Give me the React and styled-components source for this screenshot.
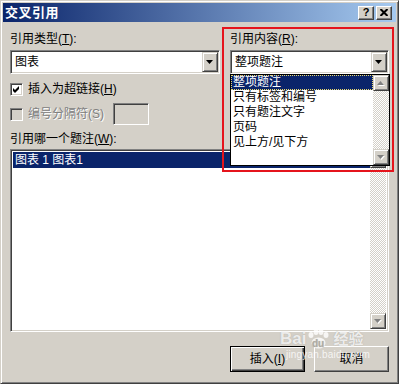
import styled, { createGlobalStyle } from "styled-components";

const GlobalStyle = createGlobalStyle`
  html, body {
    margin: 0;
    padding: 0;
    background: #d4d0c8;
  }
  body {
    font-family: "Liberation Sans", "Noto Sans CJK SC", sans-serif;
    font-size: 12px;
    color: #000;
  }
`;

const NAVY = "#0a246a";
const FACE = "#d4d0c8";

const Window = styled.div`
  position: relative;
  width: 399px;
  height: 384px;
  box-sizing: border-box;
  background: ${FACE};
  border: 1px solid;
  border-color: ${FACE} #404040 #404040 ${FACE};
  box-shadow: inset 1px 1px #fff, inset -1px -1px #808080;
  padding: 2px;
  display: flex;
  flex-direction: column;
`;

const TitleBar = styled.div`
  height: 19px;
  display: flex;
  align-items: center;
  gap: 2px;
  padding: 0 4px 0 2px;
  background: linear-gradient(to right, ${NAVY}, #a6caf0);
`;

const TitleText = styled.div`
  flex: 1;
  color: #fff;
  font-weight: bold;
  font-size: 13px;
  line-height: 15px;
  letter-spacing: 0.5px;
`;

const TitleButton = styled.div`
  width: 16px;
  height: 14px;
  box-sizing: border-box;
  background: ${FACE};
  border: 1px solid;
  border-color: #fff #404040 #404040 #fff;
  box-shadow: inset -1px -1px #808080;
  display: flex;
  align-items: center;
  justify-content: center;
  font-weight: bold;
  font-size: 11px;
  line-height: 11px;
`;

const Body = styled.div`
  flex: 1;
  display: flex;
  flex-direction: column;
  padding: 10px 7px 0;
`;

const TopGrid = styled.div`
  display: grid;
  grid-template-columns: 210px 159px;
  column-gap: 10px;
  align-items: start;
`;

const Column = styled.div`
  display: flex;
  flex-direction: column;
`;

const Label = styled.div`
  line-height: 14px;
  height: 14px;
  margin-top: ${(p) => p.$mt || 0}px;
  margin-bottom: ${(p) => p.$mb || 0}px;
  white-space: nowrap;
  color: ${(p) => (p.$disabled ? "#808080" : "#000")};
  text-shadow: ${(p) => (p.$disabled ? "1px 1px #fff" : "none")};
`;

const Field = styled.div`
  position: relative;
  display: flex;
  flex-direction: column;
`;

const Sunken = styled.div`
  box-sizing: border-box;
  border: 1px solid;
  border-color: #808080 #fff #fff #808080;
  box-shadow: inset 1px 1px #404040, inset -1px -1px ${FACE};
`;

const Combo = styled(Sunken)`
  height: 24px;
  background: #fff;
  display: flex;
  align-items: center;
  padding: 1px 1px 1px 4px;
  line-height: 14px;
`;

const ComboText = styled.div`
  flex: 1;
`;

const RaisedBtn = styled.div`
  box-sizing: border-box;
  background: ${FACE};
  border: 1px solid;
  border-color: ${FACE} #404040 #404040 ${FACE};
  box-shadow: inset 1px 1px #fff, inset -1px -1px #808080;
  display: flex;
  align-items: center;
  justify-content: center;
`;

const ArrowBtn = styled(RaisedBtn)`
  width: 16px;
  height: ${(p) => p.$h || 16}px;
  flex-shrink: 0;
`;

const CheckRow = styled.div`
  display: flex;
  align-items: center;
  gap: 5px;
  height: ${(p) => p.$h}px;
  margin-top: ${(p) => p.$mt}px;
`;

const CheckBox = styled(Sunken)`
  width: 13px;
  height: 13px;
  background: ${(p) => (p.$disabled ? FACE : "#fff")};
  display: flex;
  align-items: center;
  justify-content: center;
  flex-shrink: 0;
`;

const SmallInput = styled(Sunken)`
  width: 36px;
  height: 22px;
  margin-left: 4px;
  background: ${FACE};
`;

const ListBox = styled(Sunken)`
  height: 183px;
  margin-top: 3px;
  background: #fff;
  display: flex;
  padding: 2px;
`;

const ListRows = styled.div`
  flex: 1;
  display: flex;
  flex-direction: column;
`;

const Row = styled.div`
  height: ${(p) => p.$h}px;
  line-height: ${(p) => p.$h}px;
  padding-left: 2px;
  white-space: nowrap;
  background: ${(p) => (p.$selected ? NAVY : "transparent")};
  color: ${(p) => (p.$selected ? "#fff" : "#000")};
  outline: ${(p) => (p.$focus ? "1px dotted #e8d870" : "none")};
  outline-offset: -1px;
`;

const ScrollBar = styled.div`
  width: 16px;
  display: flex;
  flex-direction: column;
  flex-shrink: 0;
`;

const Track = styled.div`
  flex: 1;
  background-color: #fff;
  background-image: conic-gradient(${FACE} 25%, #fff 0 50%, ${FACE} 0 75%, #fff 0);
  background-size: 2px 2px;
`;

const DropList = styled.div`
  position: absolute;
  top: 100%;
  left: 0;
  width: calc(100% + 1px);
  height: 92px;
  box-sizing: border-box;
  border: 1px solid #000;
  background: #fff;
  display: flex;
  z-index: 2;
`;

const ButtonRow = styled.div`
  display: flex;
  justify-content: flex-end;
  gap: 9px;
  margin-top: 14px;
`;

const DialogButton = styled.div`
  width: 75px;
  height: 26px;
  box-sizing: border-box;
  background: ${FACE};
  display: flex;
  align-items: center;
  justify-content: center;
  line-height: 14px;
  border: 1px solid;
  border-color: ${(p) => (p.$default ? "#000" : "#fff #404040 #404040 #fff")};
  box-shadow: ${(p) =>
    p.$default
      ? "inset 1px 1px #fff, inset -1px -1px #404040, inset -2px -2px #808080"
      : "inset -1px -1px #808080"};
`;

const Highlight = styled.div`
  position: absolute;
  left: 221px;
  top: 26px;
  width: 172px;
  height: 145px;
  box-sizing: border-box;
  border: 2px solid #e5141c;
  pointer-events: none;
  z-index: 3;
`;

const Watermark = styled.div`
  position: absolute;
  left: 279px;
  top: 328px;
  color: rgba(255, 255, 255, 0.8);
  pointer-events: none;
  z-index: 4;
  display: flex;
  flex-direction: column;
  align-items: flex-start;
`;

const MarkLine = styled.div`
  display: flex;
  align-items: flex-end;
  gap: 1px;
  font-family: "Liberation Sans", "Noto Sans CJK SC", sans-serif;
  font-weight: bold;
  font-size: 17px;
  line-height: 20px;
  text-shadow: 0 0 1px rgba(120, 120, 120, 0.5);
`;

const MarkCjk = styled.span`
  font-size: 15px;
  margin-left: 3px;
`;

const MarkUrl = styled.div`
  font-size: 10px;
  line-height: 11px;
  margin-left: 6px;
  letter-spacing: 0.2px;
`;

const DownArrow = ({ disabled }) => (
  <svg width="8" height="5" viewBox="0 0 8 5">
    {disabled && <polygon points="1,1 8,1 4.5,5" fill="#fff" />}
    <polygon points="0,0 7,0 3.5,4" fill={disabled ? "#808080" : "#000"} />
  </svg>
);

const UpArrow = ({ disabled }) => (
  <svg width="8" height="5" viewBox="0 0 8 5">
    {disabled && <polygon points="1,5 8,5 4.5,1" fill="#fff" />}
    <polygon points="0,4 7,4 3.5,0" fill={disabled ? "#808080" : "#000"} />
  </svg>
);

const CheckMark = () => (
  <svg width="7" height="7" viewBox="0 0 7 7">
    <path d="M0 2 L2 4 L6 0 L6 3 L2 7 L0 5 Z" fill="#000" />
  </svg>
);

const CloseGlyph = () => (
  <svg width="8" height="7" viewBox="0 0 8 7">
    <path d="M0.5 0 L7.5 7 M7.5 0 L0.5 7" stroke="#000" strokeWidth="2" />
  </svg>
);

const Paw = () => (
  <svg width="22" height="20" viewBox="0 0 22 20">
    <g fill="rgba(255,255,255,0.8)">
      <ellipse cx="4" cy="6" rx="2.5" ry="3" />
      <ellipse cx="9" cy="3" rx="2.5" ry="3" />
      <ellipse cx="14" cy="3" rx="2.5" ry="3" />
      <ellipse cx="19" cy="6" rx="2.5" ry="3" />
      <ellipse cx="11.5" cy="14" rx="7" ry="5.5" />
    </g>
    <text x="5" y="18" fontSize="10" fontWeight="bold" fill="#b0aca4" fontFamily="Liberation Sans, sans-serif">
      du
    </text>
  </svg>
);

const Scroll = ({ arrowH }) => (
  <ScrollBar>
    <ArrowBtn $h={arrowH}>
      <UpArrow disabled />
    </ArrowBtn>
    <Track />
    <ArrowBtn $h={arrowH}>
      <DownArrow disabled />
    </ArrowBtn>
  </ScrollBar>
);

const contentItems = ["整项题注", "只有标签和编号", "只有题注文字", "页码", "见上方/见下方"];

export default function App() {
  return (
    <>
      <GlobalStyle />
      <Window>
        <TitleBar>
          <TitleText>交叉引用</TitleText>
          <TitleButton>?</TitleButton>
          <TitleButton>
            <CloseGlyph />
          </TitleButton>
        </TitleBar>
        <Body>
          <TopGrid>
            <Column>
              <Field>
                <Label $mb={4}>
                  引用类型(<u>T</u>):
                </Label>
                <Combo>
                  <ComboText>图表</ComboText>
                  <ArrowBtn $h={20}>
                    <DownArrow />
                  </ArrowBtn>
                </Combo>
              </Field>
              <CheckRow $h={16} $mt={7}>
                <CheckBox>
                  <CheckMark />
                </CheckBox>
                <Label>
                  插入为超链接(<u>H</u>)
                </Label>
              </CheckRow>
              <CheckRow $h={22} $mt={6}>
                <CheckBox $disabled />
                <Label $disabled>编号分隔符(S)</Label>
                <SmallInput />
              </CheckRow>
            </Column>
            <Column>
              <Field>
                <Label $mb={4}>
                  引用内容(<u>R</u>):
                </Label>
                <Combo>
                  <ComboText>整项题注</ComboText>
                  <ArrowBtn $h={20}>
                    <DownArrow />
                  </ArrowBtn>
                </Combo>
                <DropList>
                  <ListRows>
                    {contentItems.map((item, i) => (
                      <Row key={item} $h={15} $selected={i === 0} $focus={i === 0}>
                        {item}
                      </Row>
                    ))}
                  </ListRows>
                  <Scroll arrowH={16} />
                </DropList>
              </Field>
            </Column>
          </TopGrid>
          <Label $mt={7}>
            引用哪一个题注(<u>W</u>):
          </Label>
          <ListBox>
            <ListRows>
              <Row $h={16} $selected>
                图表 1 图表1
              </Row>
            </ListRows>
            <Scroll arrowH={16} />
          </ListBox>
          <ButtonRow>
            <DialogButton $default>
              插入(<u>I</u>)
            </DialogButton>
            <DialogButton>取消</DialogButton>
          </ButtonRow>
        </Body>
        <Highlight />
        <Watermark>
          <MarkLine>
            Bai
            <Paw />
            <MarkCjk>经验</MarkCjk>
          </MarkLine>
          <MarkUrl>jingyan.baidu.com</MarkUrl>
        </Watermark>
      </Window>
    </>
  );
}
